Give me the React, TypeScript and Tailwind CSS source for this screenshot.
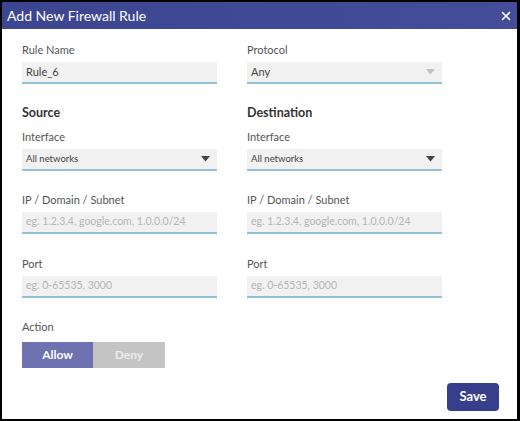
import React from "react";

const font = { fontFamily: "Lato, 'Open Sans', sans-serif" };

function Label({ children }: { children: React.ReactNode }) {
  return <div className="text-[11px] leading-[16px] text-[#555]">{children}</div>;
}

function TextField({ value, placeholder }: { value?: string; placeholder?: string }) {
  return (
    <div className="mt-[4px] h-[22px] bg-[#f1f1f1] border-b-2 border-[#8fc3d3] flex items-center px-[4px]">
      {value ? (
        <span className="text-[11px] text-[#444]">{value}</span>
      ) : (
        <span className="text-[10.5px] text-[#b5b5b5]">{placeholder}</span>
      )}
    </div>
  );
}

function SelectField({ value, light }: { value: string; light?: boolean }) {
  return (
    <div
      className={`mt-[4px] h-[22px] bg-[#f1f1f1] border-b-2 border-[#8fc3d3] flex items-center justify-between pl-[4px] pr-[7px] text-[#444] ${
        light ? "text-[11px]" : "text-[9.5px]"
      }`}
    >
      <span>{value}</span>
      <svg width="9" height="6" viewBox="0 0 9 6">
        <path d="M0 0 L9 0 L4.5 5.5 Z" fill={light ? "#c2c2c2" : "#444"} />
      </svg>
    </div>
  );
}

export default function App() {
  return (
    <div style={font} className="w-[520px] h-[421px] border-2 border-r-[3px] border-black bg-white flex flex-col">
      <div className="h-[27px] shrink-0 bg-gradient-to-r from-[#3c4590] to-[#444d98] flex items-center justify-between pl-[5px] pr-[6px]">
        <span className="text-white text-[14px]">Add New Firewall Rule</span>
        <svg width="10" height="10" viewBox="0 0 10 10">
          <path d="M1 1 L9 9 M9 1 L1 9" stroke="white" strokeWidth="1.6" />
        </svg>
      </div>

      <div className="flex-1 flex flex-col pl-[20px] pr-[18px] pt-[13px]">
        <div className="grid grid-cols-[195px_195px] gap-x-[30px]">
          <div>
            <Label>Rule Name</Label>
            <TextField value="Rule_6" />
          </div>
          <div>
            <Label>Protocol</Label>
            <SelectField value="Any" light />
          </div>

          <div className="mt-[20px]">
            <div className="text-[12.5px] leading-[18px] font-bold text-[#333]">Source</div>
            <div className="mt-[7px]">
              <Label>Interface</Label>
              <SelectField value="All networks" />
            </div>
          </div>
          <div className="mt-[20px]">
            <div className="text-[12.5px] leading-[18px] font-bold text-[#333]">Destination</div>
            <div className="mt-[7px]">
              <Label>Interface</Label>
              <SelectField value="All networks" />
            </div>
          </div>

          <div className="mt-[21px]">
            <Label>IP / Domain / Subnet</Label>
            <TextField placeholder="eg. 1.2.3.4, google.com, 1.0.0.0/24" />
          </div>
          <div className="mt-[21px]">
            <Label>IP / Domain / Subnet</Label>
            <TextField placeholder="eg. 1.2.3.4, google.com, 1.0.0.0/24" />
          </div>

          <div className="mt-[22px]">
            <Label>Port</Label>
            <TextField placeholder="eg. 0-65535, 3000" />
          </div>
          <div className="mt-[22px]">
            <Label>Port</Label>
            <TextField placeholder="eg. 0-65535, 3000" />
          </div>
        </div>

        <div className="mt-[21px]">
          <Label>Action</Label>
          <div className="mt-[7px] flex">
            <button className="w-[71px] h-[26px] bg-[#6e72b0] text-white text-[12px] font-bold">Allow</button>
            <button className="w-[72px] h-[26px] bg-[#c4c4c4] text-[#ececec] text-[12px] font-bold">Deny</button>
          </div>
        </div>

        <div className="mt-[15px] flex justify-end">
          <button className="w-[52px] h-[28px] rounded-[4px] bg-[#373f8c] text-white text-[13px] font-bold">
            Save
          </button>
        </div>
      </div>
    </div>
  );
}
